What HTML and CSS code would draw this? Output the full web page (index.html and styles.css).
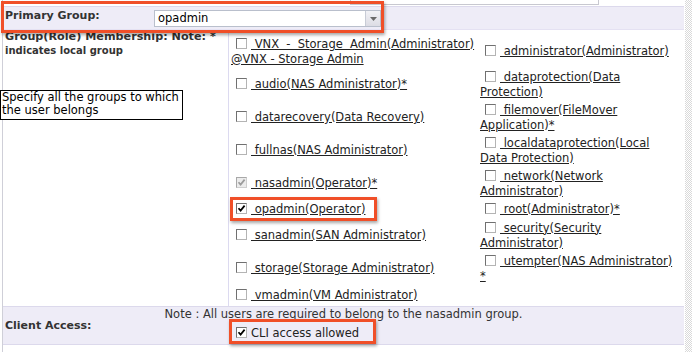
FILE: index.html
```html
<!DOCTYPE html>
<html>
<head>
<meta charset="utf-8">
<link rel="stylesheet" href="styles.css">
</head>
<body>
<div class="page">
  <div class="form">
    <div class="top-strip"><div class="prev-input"></div></div>

    <div class="row-primary">
      <div class="lbl">Primary Group:</div>
      <div class="select">
        <span class="select-value">opadmin</span>
        <span class="select-btn"><svg width="7" height="4" viewBox="0 0 7 4"><path d="M0 0H7L3.5 4Z" fill="#6a6a6a"/></svg></span>
      </div>
    </div>

    <div class="membership">
      <div class="mem-label">
        <div class="mem-title">Group(Role) Membership: Note: *</div>
        <div class="mem-sub">indicates local group</div>
      </div>
      <div class="groups">
        <div class="item"><span class="cb"></span><a class="grp">&nbsp;VNX&nbsp; -&nbsp; Storage&nbsp; Admin(Administrator)<br>@VNX - Storage Admin</a></div>
        <div class="item"><span class="cb"></span><a class="grp">&nbsp;administrator(Administrator)</a></div>

        <div class="item"><span class="cb"></span><a class="grp">&nbsp;audio(NAS Administrator)*</a></div>
        <div class="item"><span class="cb"></span><a class="grp">&nbsp;dataprotection(Data<br>Protection)</a></div>

        <div class="item"><span class="cb"></span><a class="grp">&nbsp;datarecovery(Data Recovery)</a></div>
        <div class="item"><span class="cb"></span><a class="grp">&nbsp;filemover(FileMover<br>Application)*</a></div>

        <div class="item"><span class="cb"></span><a class="grp">&nbsp;fullnas(NAS Administrator)</a></div>
        <div class="item"><span class="cb"></span><a class="grp">&nbsp;localdataprotection(Local<br>Data Protection)</a></div>

        <div class="item"><span class="cb disabled"><svg viewBox="0 0 9 9"><path d="M1.5 4.2L3.6 6.6L7.6 1.6"/></svg></span><a class="grp">&nbsp;nasadmin(Operator)*</a></div>
        <div class="item"><span class="cb"></span><a class="grp">&nbsp;network(Network<br>Administrator)</a></div>

        <div class="item"><span class="cb"><svg viewBox="0 0 9 9"><path d="M1.5 4.2L3.6 6.6L7.6 1.6"/></svg></span><a class="grp">&nbsp;opadmin(Operator)</a></div>
        <div class="item"><span class="cb"></span><a class="grp">&nbsp;root(Administrator)*</a></div>

        <div class="item"><span class="cb"></span><a class="grp">&nbsp;sanadmin(SAN Administrator)</a></div>
        <div class="item"><span class="cb"></span><a class="grp">&nbsp;security(Security<br>Administrator)</a></div>

        <div class="item"><span class="cb"></span><a class="grp">&nbsp;storage(Storage Administrator)</a></div>
        <div class="item"><span class="cb"></span><a class="grp">&nbsp;utempter(NAS Administrator)<br>*</a></div>

        <div class="item"><span class="cb"></span><a class="grp">&nbsp;vmadmin(VM Administrator)</a></div>
      </div>
    </div>

    <div class="client">
      <div class="note">Note : All users are required to belong to the nasadmin group.</div>
      <div class="lbl client-lbl">Client Access:</div>
      <div class="cli"><span class="cb"><svg viewBox="0 0 9 9"><path d="M1.5 4.2L3.6 6.6L7.6 1.6"/></svg></span>CLI access allowed</div>
    </div>
  </div>
  <div class="scrollbar"></div>

  <div class="help">Specify all the groups to which<br>the user belongs</div>
  <div class="hl hl-primary"></div>
  <div class="hl hl-opadmin"></div>
  <div class="hl hl-cli"></div>
</div>
</body>
</html>
```
FILE: styles.css
```css
* { box-sizing: border-box; }
html, body { margin: 0; padding: 0; background: #fff; }
body {
  font-family: "DejaVu Sans", Verdana, sans-serif;
  font-size: 11.5px;
  color: #333;
}
.page {
  position: relative;
  display: flex;
  width: 692px;
  height: 352px;
  overflow: hidden;
}
.form {
  width: 682px;
  margin-left: 2px;
  border-left: 1px solid #cfcfd8;
}
.top-strip {
  height: 7px;
  padding-left: 347px;
  border-bottom: 1px solid #dcd9ec;
}
.prev-input {
  width: 249px;
  height: 5px;
  border: 1px solid #c8c8d0;
  border-top: 0;
}
.row-primary {
  display: flex;
  align-items: flex-start;
  height: 23px;
  background: #eeecf7;
  border-bottom: 1px solid #e4e1f2;
}
.lbl {
  width: 151px;
  padding: 2px 0 0 2px;
  font-size: 11px;
  font-weight: bold;
  line-height: 14px;
}
.select {
  display: flex;
  width: 227px;
  height: 17px;
  margin-top: 3px;
  background: #fff;
  border: 1px solid #b9bfcc;
}
.select-value {
  flex: 1;
  padding-left: 3px;
  line-height: 15px;
  color: #000;
}
.select-btn {
  width: 15px;
  display: flex;
  align-items: center;
  justify-content: center;
  background: linear-gradient(#f2f2f6, #dcdce4);
  border-left: 1px solid #c8ccd6;
}
.membership {
  display: grid;
  grid-template-columns: 226px 1fr;
}
.mem-label {
  border-right: 1px solid #dcdaf0;
  padding-left: 2px;
}
.mem-title { font-size: 11.2px; font-weight: bold; line-height: 14px; }
.mem-sub { font-size: 10px; font-weight: bold; line-height: 14px; }
.groups {
  display: grid;
  grid-template-columns: 249px 200px;
  grid-template-rows: 33px 33px 33px 33px 33px 19px 33px 33px 21px;
  align-items: center;
  padding: 5px 0 0 2px;
}
.item {
  line-height: 15px;
  white-space: nowrap;
}
.cb {
  display: inline-block;
  width: 11px;
  height: 11px;
  margin: 0 4px 0 5px;
  vertical-align: -1px;
  background: #fff;
  border: 1px solid;
  border-color: #707070 #b4b4b4 #b4b4b4 #707070;
}
.cb svg {
  display: block;
  width: 9px;
  height: 9px;
  fill: none;
  stroke: #000;
  stroke-width: 1.7;
}
.cb.disabled {
  background: #ececec;
  border-color: #a8a8a8 #cfcfcf #cfcfcf #a8a8a8;
}
.cb.disabled svg { stroke: #9c9c9c; }
.grp {
  color: #222;
  text-decoration: underline;
}
.client {
  display: grid;
  grid-template-columns: 226px 1fr;
  grid-template-rows: 15px 22px;
  background: #eeecf7;
  border-top: 1px solid #dcd9ec;
  border-bottom: 1px solid #dcd9ec;
}
.note {
  grid-column: 1 / -1;
  grid-row: 1;
  text-align: center;
  line-height: 15px;
}
.client-lbl {
  grid-column: 1;
  grid-row: 1 / 3;
  align-self: center;
  padding-top: 0;
}
.cli {
  grid-column: 2;
  grid-row: 2;
  align-self: center;
  padding-left: 2px;
  line-height: 15px;
  color: #222;
}
.scrollbar {
  width: 7px;
  margin-left: 1px;
  background: repeating-conic-gradient(#d9d9d9 0 25%, #fff 0 50%) 0 0 / 2px 2px;
}
.help {
  position: absolute;
  left: 0;
  top: 90px;
  width: 183px;
  height: 30px;
  padding: 0 1px;
  border: 1px solid #000;
  background: #fff;
  color: #000;
  line-height: 13px;
}
.hl {
  position: absolute;
  border: 3px solid #f04f28;
  box-shadow: 1px 2px 3px rgba(0, 0, 0, 0.35);
}
.hl-primary { left: 1px; top: 1px; width: 383px; height: 32px; }
.hl-opadmin { left: 230px; top: 197px; width: 147px; height: 24px; }
.hl-cli { left: 229px; top: 319px; width: 147px; height: 25px; }
```
